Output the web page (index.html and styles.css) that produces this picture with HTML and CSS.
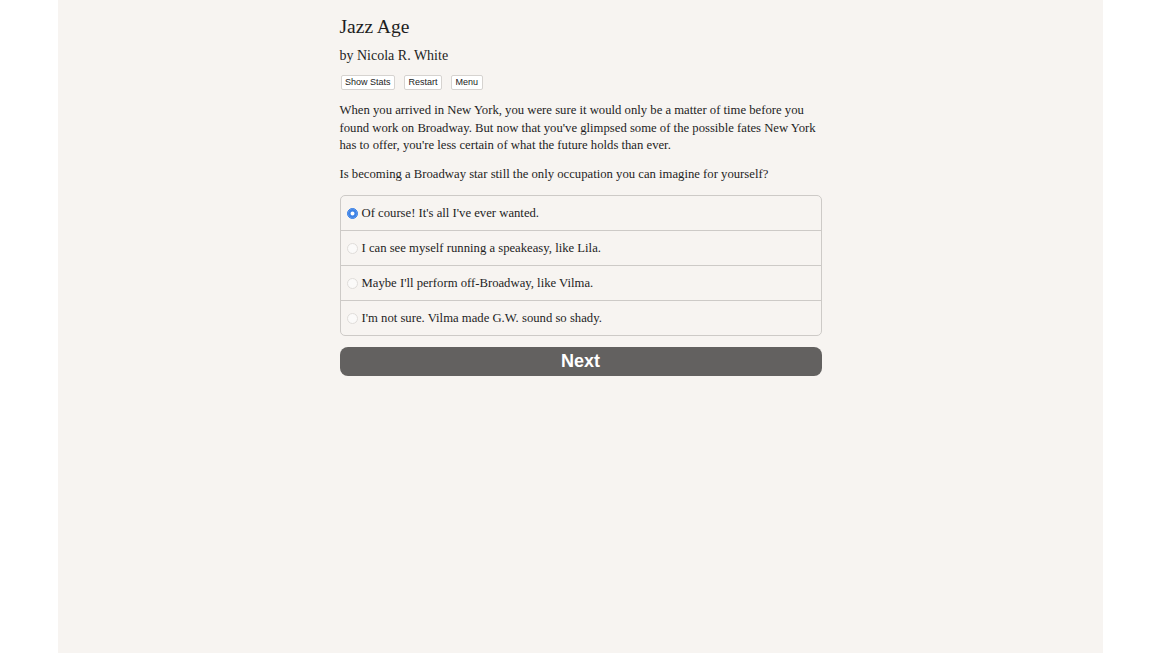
FILE: index.html
```html
<!DOCTYPE html>
<html lang="en">
<head>
    <meta charset="UTF-8">
    <meta name="viewport" content="width=device-width, initial-scale=1.0">
    <title>Jazz Age</title>
    <link rel="stylesheet" href="styles.css">
</head>
<body>
    <div class="page">
        <div class="story">
            <h1 class="title">Jazz Age</h1>
            <h2 class="author">by Nicola R. White</h2>
            <div class="buttons">
                <button class="small-btn">Show Stats</button>
                <button class="small-btn">Restart</button>
                <button class="small-btn">Menu</button>
            </div>
            <p>When you arrived in New York, you were sure it would only be a matter of time before you found work on Broadway. But now that you've glimpsed some of the possible fates New York has to offer, you're less certain of what the future holds than ever.</p>
            <p>Is becoming a Broadway star still the only occupation you can imagine for yourself?</p>

            <div class="choices">
                <label class="choice"><span class="radio checked"></span>Of course! It's all I've ever wanted.</label>
                <label class="choice"><span class="radio"></span>I can see myself running a speakeasy, like Lila.</label>
                <label class="choice"><span class="radio"></span>Maybe I'll perform off-Broadway, like Vilma.</label>
                <label class="choice"><span class="radio"></span>I'm not sure. Vilma made G.W. sound so shady.</label>
            </div>
            <button class="next-btn">Next</button>
        </div>
    </div>
</body>
</html>
```

FILE: styles.css
```css
body {
    margin: 0;
    background-color: #ffffff;
    color: #1e1e1e;
    font-family: "Liberation Serif", serif;
}
.page {
    width: 1045px;
    min-height: 653px;
    margin-left: 58px;
    background-color: #f7f4f1;
    display: flex;
    justify-content: center;
}
.story {
    width: 482px;
    padding-top: 14px;
}
.title {
    margin: 0;
    font-size: 19.5px;
    font-weight: normal;
    line-height: 26px;
}
.author {
    margin: 6px 0 0;
    font-size: 14px;
    font-weight: normal;
    line-height: 20px;
}
.buttons {
    display: flex;
    gap: 9px;
    margin-top: 9px;
    padding-left: 1px;
}
.small-btn {
    font-family: "Liberation Sans", Arial, sans-serif;
    font-size: 9px;
    line-height: 11px;
    padding: 1px 3.5px;
    background-color: #ffffff;
    color: #222222;
    border: 1px solid #d6d3d0;
    border-radius: 2px;
}
p {
    margin: 12px 0 0;
    font-size: 12.7px;
    line-height: 17.5px;
}
p + p {
    margin-top: 11px;
}
.choices {
    margin-top: 12px;
    border: 1px solid #cdcac7;
    border-radius: 5px;
}
.choice {
    display: flex;
    align-items: center;
    height: 34px;
    padding-left: 6px;
    font-size: 12.7px;
    border-top: 1px solid #cdcac7;
}
.choice:first-child {
    border-top: none;
}
.radio {
    width: 9px;
    height: 9px;
    border-radius: 50%;
    border: 1px solid #e0ddda;
    background-color: #fbfaf9;
    margin-right: 4px;
    flex-shrink: 0;
}
.radio.checked {
    border-color: #3d82e6;
    background-color: #3d82e6;
    box-shadow: inset 0 0 0 2.5px #3d82e6, inset 0 0 0 5px #ffffff;
}
.next-btn {
    display: block;
    width: 100%;
    height: 29px;
    margin-top: 11px;
    border: none;
    border-radius: 8px;
    background-color: #636160;
    color: #ffffff;
    font-family: "Liberation Sans", Arial, sans-serif;
    font-weight: bold;
    font-size: 18px;
}
```
